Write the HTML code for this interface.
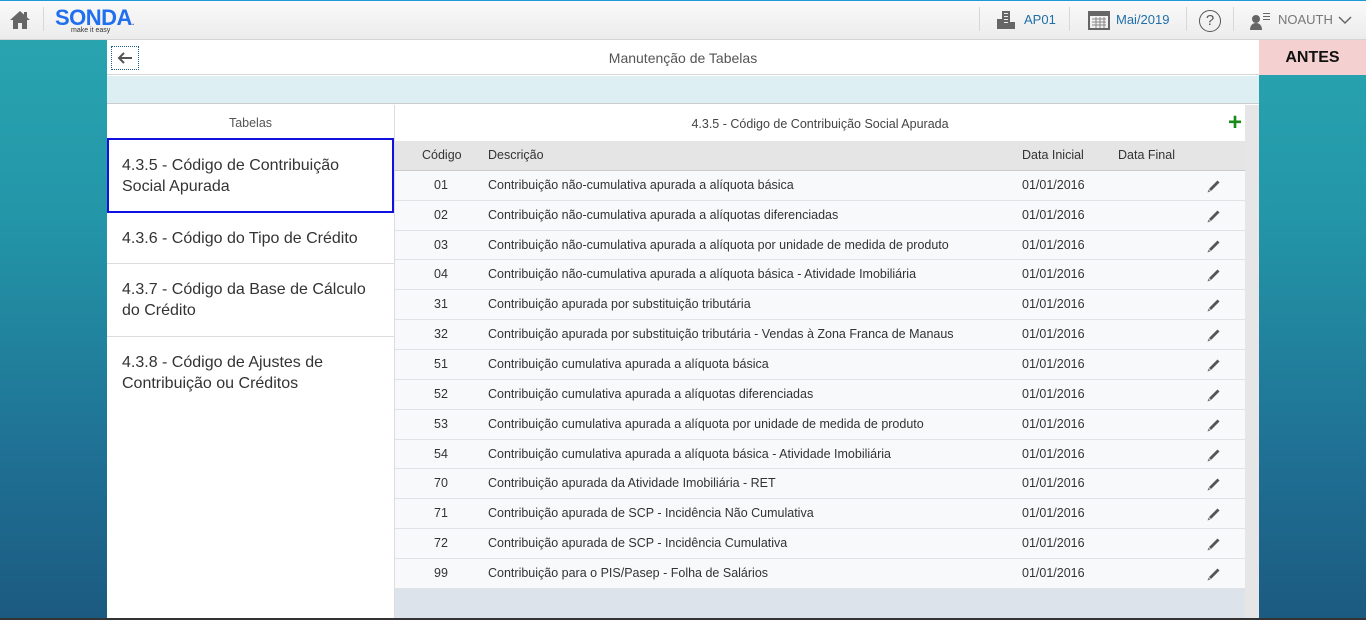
<!DOCTYPE html>
<html><head><meta charset="utf-8"><style>
*{margin:0;padding:0;box-sizing:border-box}
body{width:1366px;height:620px;overflow:hidden;font-family:"Liberation Sans",Arial,sans-serif;background:linear-gradient(180deg,#2aa7b1 0%,#2396a8 35%,#1f6f93 75%,#1c5a80 100%);position:relative}
.hdr{position:absolute;left:0;top:0;width:1366px;height:40px;background:linear-gradient(#fafafa,#ececec);border-top:1px solid #1d9ad6;border-bottom:1px solid #d4d4d4}
.sep{position:absolute;top:6px;width:1px;height:24px;background:#d8d8d8}
.ht{position:absolute;top:11px;font-size:13px;color:#1f6fa8}
.main{position:absolute;left:107px;top:40px;width:1152px;height:578px;background:#fff}
.title{position:absolute;left:0;top:0;width:1152px;height:35px;border-bottom:1px solid #d6d6d6;text-align:center;font-size:14px;color:#555;line-height:36px}
.band{position:absolute;left:0;top:36px;width:1152px;height:28px;background:#ddeff3;border-bottom:1px solid #ccc}
.left{position:absolute;left:0;top:65px;width:288px;height:513px;background:#fff;border-right:1px solid #ddd}
.item{border-bottom:1px solid #ddd;padding:0 15px;font-size:16px;color:#333;line-height:21px}
.right{position:absolute;left:288px;top:65px;width:850px;height:513px;background:#dde3ea}
.row{position:relative;width:850px;height:30px;background:#f7f9fa;border-bottom:1px solid #dfe3e6;font-size:12.5px;color:#333;line-height:29px}
.row span{position:absolute}
.sb{position:absolute;left:1138px;top:65px;width:14px;height:513px;background:#e6e6e6}
</style></head><body>
<div class="hdr">
 <svg style="position:absolute;left:9px;top:9px" width="22" height="20" viewBox="0 0 22 20"><path d="M11 1L1 10h3v9h5v-6h4v6h5v-9h3z" fill="#666"/><rect x="15" y="2" width="3" height="5" fill="#666"/></svg>
 <div class="sep" style="left:43px"></div>
 <div style="position:absolute;left:55px;top:4px;font-size:22px;font-weight:bold;color:#1f6ff0;letter-spacing:-0.5px">SONDA<span style="font-size:8px;color:#555">.</span></div>
 <div style="position:absolute;left:71px;top:26px;font-size:7px;color:#333">make it easy</div>
 <div class="sep" style="left:979px"></div>
 <svg style="position:absolute;left:996px;top:9px" width="20" height="20" viewBox="0 0 20 20" fill="#666"><rect x="6" y="1" width="8" height="18"/><rect x="1" y="9" width="5" height="10"/><rect x="14" y="12" width="5" height="7"/><g fill="#eee"><rect x="8" y="3" width="4" height="1"/><rect x="8" y="6" width="4" height="1"/><rect x="8" y="9" width="4" height="1"/><rect x="8" y="12" width="4" height="1"/></g></svg>
 <div class="ht" style="left:1024px">AP01</div>
 <div class="sep" style="left:1069px"></div>
 <svg style="position:absolute;left:1088px;top:8px" width="22" height="21" viewBox="0 0 22 21"><rect x="1" y="3" width="20" height="17" fill="none" stroke="#666" stroke-width="2"/><rect x="1" y="3" width="20" height="4" fill="#666"/><path d="M4 10h14M4 13h14M4 16h14M8 8v11M12 8v11M16 8v11" stroke="#888"/></svg>
 <div class="ht" style="left:1116px">Mai/2019</div>
 <div class="sep" style="left:1186px"></div>
 <div style="position:absolute;left:1199px;top:9px;width:22px;height:22px;border:1.5px solid #555;border-radius:50%;text-align:center;font-size:15px;color:#555;line-height:19px">?</div>
 <div class="sep" style="left:1233px"></div>
 <svg style="position:absolute;left:1249px;top:10px" width="22" height="20" viewBox="0 0 22 20" fill="#666"><circle cx="7" cy="8" r="4"/><path d="M1 19c0-5 3-7 6-7s6 2 6 7z"/><rect x="14" y="2" width="7" height="1"/><rect x="14" y="5" width="7" height="1"/><rect x="14" y="8" width="7" height="1"/></svg>
 <div class="ht" style="left:1278px;color:#777">NOAUTH</div>
 <svg style="position:absolute;left:1338px;top:14px" width="14" height="10"><path d="M1 2l6 6 6-6" stroke="#666" stroke-width="1.5" fill="none"/></svg>
</div>
<div style="position:absolute;left:1259px;top:40px;width:107px;height:35px;background:#f5d0d0;text-align:center;font-weight:bold;font-size:16px;line-height:36px;color:#111">ANTES</div>
<div class="main">
 <div class="title">Manutenção de Tabelas</div>
 <div style="position:absolute;left:4px;top:6px;width:28px;height:24px;border:1px dotted #1f5f90"><svg width="26" height="22"><path d="M7 11h13M12 6l-5 5 5 5" stroke="#555" stroke-width="2" fill="none"/></svg></div>
 <div class="band"></div>
 <div class="left">
  <div style="height:33px;text-align:center;font-size:12.5px;color:#555;line-height:36px">Tabelas</div>
  <div class="item" style="height:75px;border:2px solid #1010e0;padding:15px 13px">4.3.5 - Código de Contribuição Social Apurada</div>
  <div class="item" style="height:51px;padding-top:15px">4.3.6 - Código do Tipo de Crédito</div>
  <div class="item" style="height:73px;padding-top:15px">4.3.7 - Código da Base de Cálculo do Crédito</div>
  <div class="item" style="border:none;padding-top:15px">4.3.8 - Código de Ajustes de Contribuição ou Créditos</div>
 </div>
 <div class="right">
  <div style="position:absolute;left:0;top:0;width:850px;height:36px;background:#fff;text-align:center;font-size:12.5px;color:#444;line-height:38px">4.3.5 - Código de Contribuição Social Apurada<span style="position:absolute;right:3px;top:-1px;font-size:24px;color:#1a8a1a;font-weight:bold">+</span></div>
  <div style="position:absolute;left:0;top:36px;width:850px;height:30px;background:#e5e5e5;border-bottom:1px solid #ccc;font-size:12.5px;color:#333;line-height:28px">
   <span style="position:absolute;left:27px">Código</span><span style="position:absolute;left:93px">Descrição</span><span style="position:absolute;left:627px">Data Inicial</span><span style="position:absolute;left:723px">Data Final</span></div>
  <div id="rows" style="position:absolute;left:0;top:66px"></div>
 </div>
 <div class="sb"></div>
</div>
<div style="position:absolute;left:0;top:618px;width:1366px;height:2px;background:#333"></div>
<script>
var d=[["01","Contribuição não-cumulativa apurada a alíquota básica"],["02","Contribuição não-cumulativa apurada a alíquotas diferenciadas"],["03","Contribuição não-cumulativa apurada a alíquota por unidade de medida de produto"],["04","Contribuição não-cumulativa apurada a alíquota básica - Atividade Imobiliária"],["31","Contribuição apurada por substituição tributária"],["32","Contribuição apurada por substituição tributária - Vendas à Zona Franca de Manaus"],["51","Contribuição cumulativa apurada a alíquota básica"],["52","Contribuição cumulativa apurada a alíquotas diferenciadas"],["53","Contribuição cumulativa apurada a alíquota por unidade de medida de produto"],["54","Contribuição cumulativa apurada a alíquota básica - Atividade Imobiliária"],["70","Contribuição apurada da Atividade Imobiliária - RET"],["71","Contribuição apurada de SCP - Incidência Não Cumulativa"],["72","Contribuição apurada de SCP - Incidência Cumulativa"],["99","Contribuição para o PIS/Pasep - Folha de Salários"]];
var h="";d.forEach(function(r,i){h+='<div class="row"'+((i==2||i==9)?' style="height:29px"':'')+'><span style="left:39px">'+r[0]+'</span><span style="left:93px">'+r[1]+'</span><span style="left:627px">01/01/2016</span><svg style="position:absolute;left:811px;top:7px" width="16" height="16" viewBox="0 0 16 16"><path d="M3 11L11.5 2.5l2 2L5 13z" fill="#555"/><path d="M2.5 11.5l2 2L1.5 14.5z" fill="#777"/></svg></div>'});
document.getElementById("rows").innerHTML=h;
</script>
</body></html>
